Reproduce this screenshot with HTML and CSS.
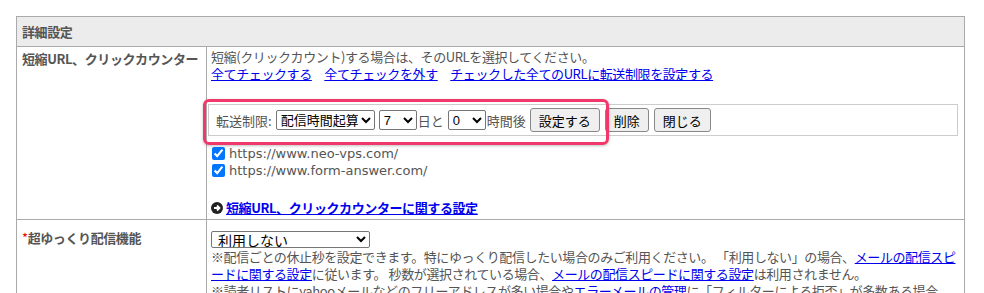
FILE: index.html
```html
<!doctype html>
<html>
	<head>
		<meta charset="utf-8">
		<link rel="stylesheet" href="styles.css">
	</head>
	<body>
		<div class="page">
			<p class="lead">メルマガの配信に関する詳細設定を行います。</p>
			<table class="settings">
				<tr>
					<th colspan="2" class="head">詳細設定</th>
				</tr>
				<tr>
					<th class="label">短縮URL、クリックカウンター</th>
					<td class="value">
						<div>短縮(クリックカウント)する場合は、そのURLを選択してください。</div>
						<div class="links">
							<a href="#">全てチェックする</a>
							<a href="#">全てチェックを外す</a>
							<a href="#">チェックした全てのURLに転送制限を設定する</a>
						</div>
						<div class="limit">
							<div class="limit-form">
								<span>転送制限:</span>
								<select class="sel-mode"><option>配信時間起算</option></select>
								<select class="sel-num"><option>7</option></select><span>日と</span>
								<select class="sel-num"><option>0</option></select><span>時間後</span>
								<button>設定する</button>
								<span class="mark"></span>
							</div>
							<button>削除</button>
							<button>閉じる</button>
						</div>
						<label class="url"><input type="checkbox" checked> https://www.neo-vps.com/</label>
						<label class="url"><input type="checkbox" checked> https://www.form-answer.com/</label>
						<div class="more">
							<svg width="12" height="12" viewBox="0 0 12 12"><circle cx="6" cy="6" r="6" fill="#222"/><path d="M3 6h5M6 3.5 8.5 6 6 8.5" stroke="#fff" stroke-width="1.8" fill="none"/></svg>
							<a href="#">短縮URL、クリックカウンターに関する設定</a>
						</div>
					</td>
				</tr>
				<tr>
					<th class="label slow"><span class="req">*</span>超ゆっくり配信機能</th>
					<td class="value slow">
						<select class="sel-slow"><option>利用しない</option></select>
						<div>※配信ごとの休止秒を設定できます。特にゆっくり配信したい場合のみご利用ください。 「利用しない」の場合、<a href="#">メールの配信スピードに関する設定</a>に従います。 秒数が選択されている場合、<a href="#">メールの配信スピードに関する設定</a>は利用されません。</div>
						<div>※読者リストにyahooメールなどのフリーアドレスが多い場合や<a href="#">エラーメールの管理</a>に「フィルターによる拒否」が多数ある場合、ご利用ください。</div>
					</td>
				</tr>
			</table>
		</div>
	</body>
</html>
```
FILE: styles.css
```css
*{
	margin: 0;
	padding: 0;
}
body{
	font-family: "Noto Sans CJK JP", sans-serif;
	font-size: 13px;
	line-height: 17px;
	letter-spacing: -0.4px;
	color: #555;
	background: #fff;
	overflow: hidden;
}
.page{
	padding: 0 19px 0 16px;
}
.lead{
	margin-top: -17px;
	margin-bottom: 16px;
	padding-left: 10px;
	font-size: 14px;
}
a{
	color: #0000ee;
}

/**
 * table
 */
.settings{
	width: 100%;
	border-collapse: collapse;
	border: 1px solid #aaa;
}
.settings th, .settings td{
	border: 1px solid #aaa;
	vertical-align: top;
	text-align: left;
}
.head{
	background: #ececec;
	padding: 6px 5px;
	font-weight: bold;
}
.label{
	width: 179px;
	padding: 3px 5px;
	font-weight: bold;
	white-space: nowrap;
}
.value{
	padding: 1px 4px 0;
}
.links a{
	margin-right: 10px;
}

/* transfer limit box */
.limit{
	position: relative;
	display: flex;
	align-items: center;
	gap: 5px;
	margin: 22px 2px 9px -3px;
	padding: 3px 7px;
	border: 1px solid #ccc;
	letter-spacing: 0;
}
.limit-form{
	display: flex;
	align-items: center;
	gap: 4px;
}
.limit-form span{
	margin-left: -3px;
}
.limit-form span:first-child{
	margin-left: 0;
}
select{
	font-family: "Liberation Sans", "Noto Sans CJK JP", sans-serif;
	font-size: 13px;
	height: 20px;
	color: #000;
	border: 1px solid #767676;
	border-radius: 2px;
	background: #fff;
}
.sel-mode{
	width: 99px;
}
.sel-num{
	width: 38px;
}
button{
	font-family: inherit;
	font-size: 13px;
	color: #000;
	height: 24px;
	padding: 0 8px;
	background: #efefef;
	border: 1px solid #888;
	border-radius: 3px;
}
.mark{
	position: absolute;
	left: -3px;
	top: -6px;
	width: 400px;
	height: 40px;
	border: 3px solid #f0386b;
	border-radius: 6px;
	box-shadow: 0 1px 3px rgba(0,0,0,0.25);
	pointer-events: none;
}
.url{
	display: flex;
	align-items: center;
	gap: 4px;
	font-family: "DejaVu Sans", sans-serif;
	font-size: 13px;
	letter-spacing: 0;
}
.url input{
	width: 13px;
	height: 13px;
	margin: 0 0 0 1px;
	accent-color: #0075ff;
}
.more{
	display: flex;
	align-items: center;
	gap: 3px;
	height: 17px;
	margin-top: 20px;
	margin-bottom: 3px;
	font-weight: bold;
}

/* slow delivery row */
.slow.label{
	padding-top: 9px;
}
.value.slow{
	padding-top: 11px;
}
.req{
	color: #e00;
	font-weight: normal;
}
.sel-slow{
	width: 159px;
	height: 17px;
	padding: 0 0 0 2px;
	font-size: 14px;
	display: block;
}
```
